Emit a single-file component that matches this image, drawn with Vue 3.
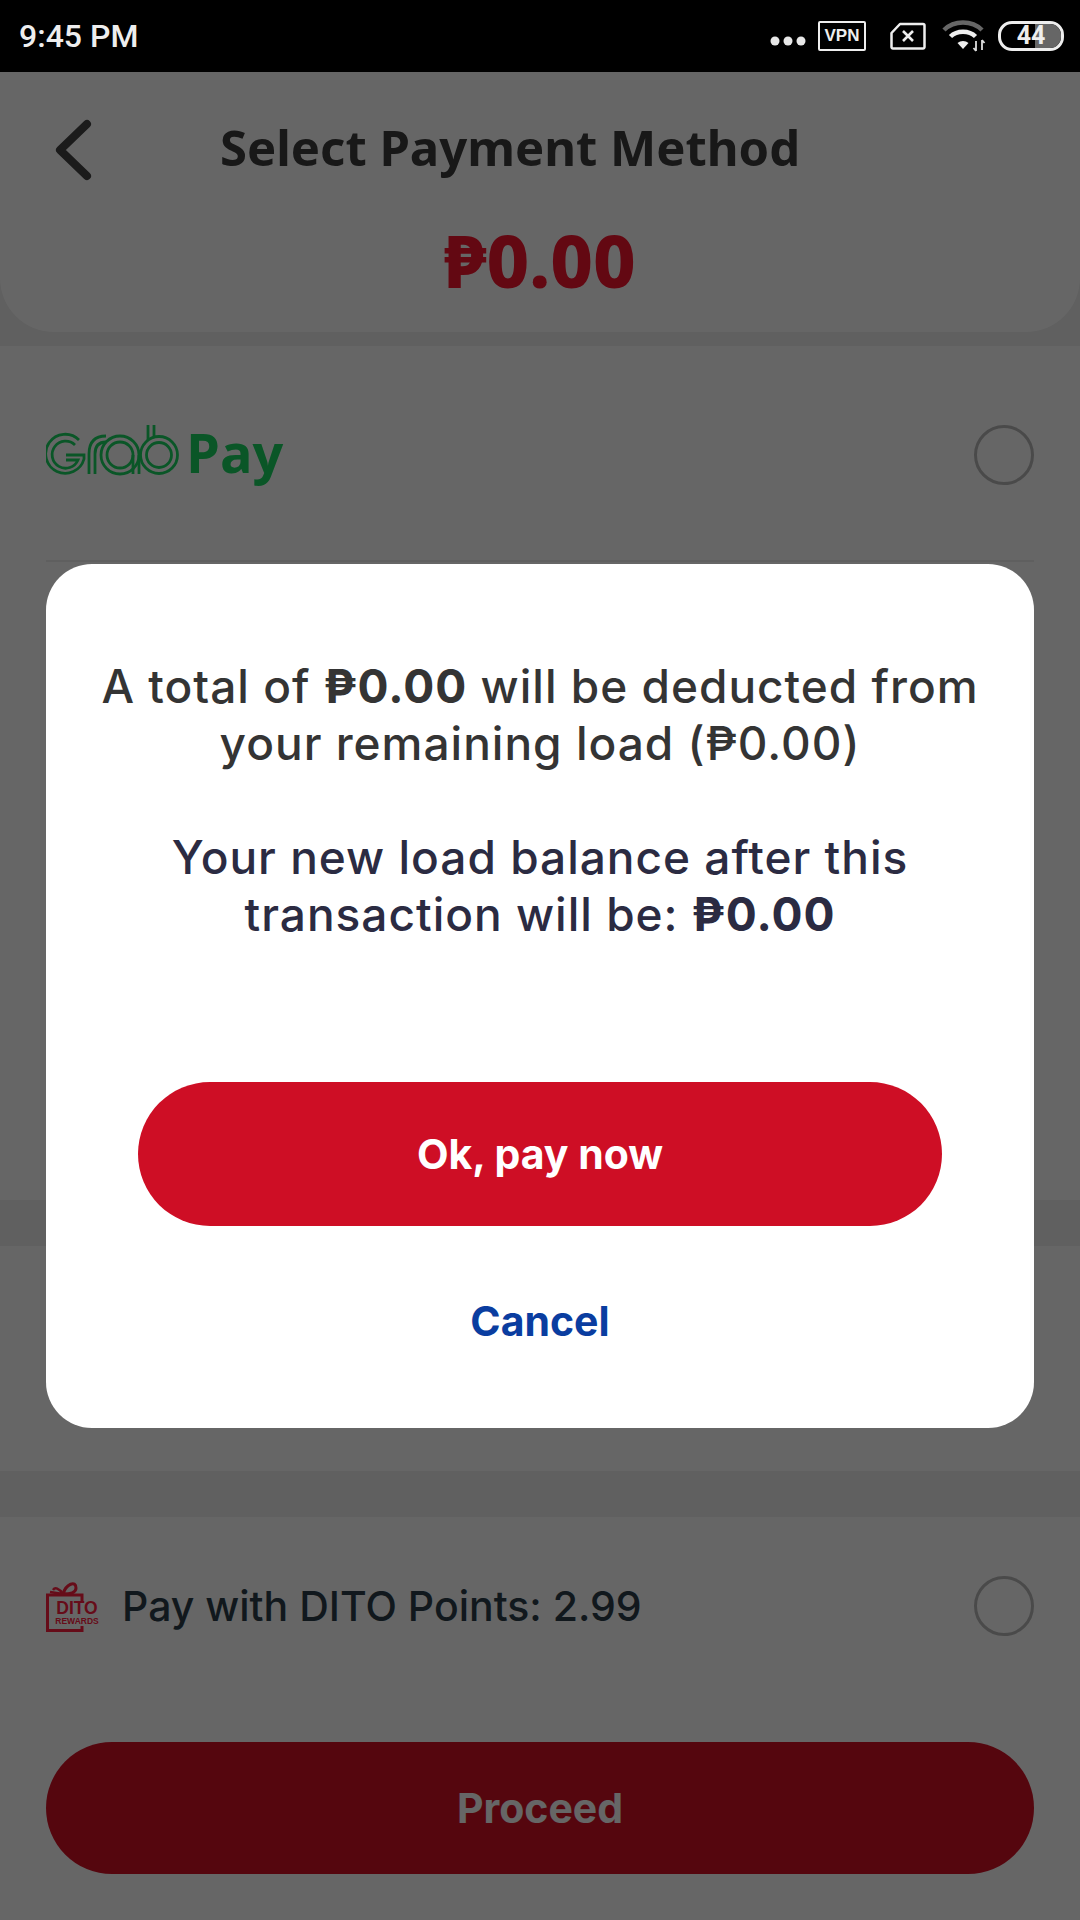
<template>
  <div class="screen">
    <div class="status-bar">
      <span class="clock">9:45 PM</span>
      <div class="status-icons">
        <svg class="dots" width="36" height="10" viewBox="0 0 36 10">
          <circle cx="5" cy="5" r="4.5" fill="#e8e8e8" />
          <circle cx="18" cy="5" r="4.5" fill="#e8e8e8" />
          <circle cx="31" cy="5" r="4.5" fill="#e8e8e8" />
        </svg>
        <span class="vpn">VPN</span>
        <svg class="sim" width="36" height="28" viewBox="0 0 36 28">
          <path d="M10 2H33a1.500 1.500 0 0 1 1.500 1.500V25a1.500 1.500 0 0 1-1.500 1.500H3A1.500 1.500 0 0 1 1.500 25V11Z" fill="none" stroke="#eee" stroke-width="2.500" stroke-linejoin="round" />
          <path d="M13 9l10 10M23 9L13 19" stroke="#eee" stroke-width="2.600" />
        </svg>
        <svg class="wifi" width="44" height="34" viewBox="0 0 44 34">
          <path d="M2 11C12 1 30 1 40 11" fill="none" stroke="#666" stroke-width="4.500" />
          <path d="M8.500 17.500C15 11 27 11 33.500 17.500" fill="none" stroke="#eee" stroke-width="4.500" />
          <path d="M15.500 24a8.500 8.500 0 0 1 11 0L21 30Z" fill="#eee" />
          <path d="M34 22v10M34 32l-2.500-3M40 31V21M40 21l2.500 3" stroke="#ddd" stroke-width="1.800" fill="none" />
        </svg>
        <div class="battery">
          <div class="battery-fill"></div>
          <span class="battery-num">44</span>
        </div>
      </div>
    </div>

    <div class="page">
      <div class="header">
        <div class="title-row">
          <svg class="back" width="38" height="62" viewBox="0 0 38 62">
            <path d="M33 5L6 31l27 26" fill="none" stroke="#444" stroke-width="8" stroke-linecap="round" stroke-linejoin="round" />
          </svg>
          <span class="title">Select Payment Method</span>
        </div>
        <div class="amount">₱0.00</div>
      </div>

      <div class="section grab-section">
        <div class="row grab-row">
          <div class="grab-logo">
            <svg width="140" height="62" viewBox="0 2 140 62">
              <g fill="none" stroke="#1ad863" stroke-width="2.800">
                <path d="M33 18A19.500 19.500 0 1 0 38 37V33H20" />
                <path d="M29 23A13.500 13.500 0 1 0 32 38H20" />
                <path d="M43 52V32Q43 14 60 14" />
                <path d="M49 52V32Q49 20 60 20" />
                <circle cx="74" cy="33" r="19" />
                <circle cx="74" cy="33" r="13" />
                <path d="M93 33V52M87 33V52" />
                <circle cx="113" cy="33" r="18.500" />
                <circle cx="113" cy="33" r="12.500" />
                <path d="M102 18V3M108 15V3" />
              </g>
            </svg>
            <span class="grab-pay">Pay</span>
          </div>
          <span class="radio"></span>
        </div>
        <div class="divider"></div>
      </div>

      <div class="band"></div>
      <div class="section middle-section"></div>
      <div class="band"></div>

      <div class="section points-section">
        <div class="row points-row">
          <div class="points-label">
            <svg class="dito" width="54" height="52" viewBox="0 0 54 52">
              <g fill="none" stroke="#ff2040">
                <path d="M36 21V15H1.500V50.500H36V46" stroke-width="3" />
                <path d="M17 14C20 4 30 0 30 8C30 13 22 14 17 14Z" stroke-width="3" />
                <path d="M17 14C13 8 9 7 7 10M17 14L4 12" stroke-width="2.500" />
              </g>
              <text x="31" y="34" class="dito-word">DITO</text>
              <text x="31" y="44" class="dito-sub">REWARDS</text>
            </svg>
            <span>Pay with DITO Points: 2.99</span>
          </div>
          <span class="radio"></span>
        </div>
        <button class="proceed">Proceed</button>
      </div>

      <div class="overlay">
        <div class="modal">
          <div class="message">
            <p class="line-one">A total of <b>₱0.00</b> will be deducted from<br />your remaining load (₱0.00)</p>
            <p class="line-two">Your new load balance after this<br />transaction will be: <b>₱0.00</b></p>
          </div>
          <button class="pay-now">Ok, pay now</button>
          <button class="cancel">Cancel</button>
        </div>
      </div>
    </div>
  </div>
</template>

<script setup>
</script>

<style>
html, body {
  margin: 0;
  background: #fff;
}
</style>

<style scoped>
.screen {
  width: 1080px;
  height: 1920px;
  display: flex;
  flex-direction: column;
  overflow: hidden;
  font-family: Inter, "Noto Sans", sans-serif;
}
.status-bar {
  height: 72px;
  background: #000;
  display: flex;
  align-items: center;
  justify-content: space-between;
  padding: 0 16px 0 19px;
  color: #eee;
  flex-shrink: 0;
}
.clock {
  font-family: Roboto, sans-serif;
  font-size: 32px;
  font-weight: 500;
}
.status-icons {
  display: flex;
  align-items: center;
}
.dots {
  margin: 10px 12px 0 0;
}
.vpn {
  width: 44px;
  height: 26px;
  border: 2px solid #eee;
  font-family: "Liberation Sans", sans-serif;
  font-size: 17px;
  font-weight: 700;
  line-height: 26px;
  text-align: center;
  margin-right: 24px;
  border-radius: 2px;
}
.sim {
  margin-right: 16px;
}
.wifi {
  margin-right: 12px;
}
.battery {
  position: relative;
  width: 60px;
  height: 24px;
  border: 3px solid #eee;
  border-radius: 14px;
  text-align: center;
  overflow: hidden;
}
.battery-fill {
  position: absolute;
  top: 0;
  bottom: 0;
  left: 56%;
  width: 44%;
  background: #666;
}
.battery-num {
  position: relative;
  display: block;
  font-family: Roboto, sans-serif;
  font-size: 25px;
  font-weight: 700;
  line-height: 24px;
}
.page {
  position: relative;
  flex: 1;
  display: flex;
  flex-direction: column;
  background: #efefef;
}
.header {
  height: 260px;
  box-sizing: border-box;
  background: #fff;
  border-radius: 0 0 54px 54px;
  padding-top: 43px;
  margin-bottom: 14px;
}
.title-row {
  height: 64px;
  display: flex;
  align-items: center;
  padding-left: 54px;
}
.back {
  margin-top: 6px;
}
.title {
  margin-left: 128px;
  font-family: "Noto Sans", sans-serif;
  font-size: 49px;
  font-weight: 700;
  color: #3d3d3d;
}
.amount {
  margin-top: 42px;
  text-align: center;
  font-family: "Noto Sans", sans-serif;
  font-size: 74px;
  line-height: 78px;
  font-weight: 800;
  color: #f7142f;
}
.section {
  background: #fff;
  padding: 0 46px;
}
.row {
  display: flex;
  align-items: center;
  justify-content: space-between;
}
.grab-section {
  height: 854px;
  flex-shrink: 0;
}
.grab-row {
  height: 214px;
  box-sizing: border-box;
  padding-top: 4px;
}
.grab-logo {
  display: flex;
  align-items: center;
}
.grab-pay {
  margin-top: -6px;
  font-family: "Open Sans", sans-serif;
  font-size: 54px;
  font-weight: 700;
  color: #1ad863;
}
.radio {
  width: 54px;
  height: 54px;
  border: 3px solid #b9b9b9;
  border-radius: 50%;
}
.divider {
  height: 2px;
  background: #eeeeee;
}
.band {
  height: 46px;
  flex-shrink: 0;
  background: #f0f0f0;
}
.middle-section {
  height: 225px;
  flex-shrink: 0;
}
.points-section {
  flex: 1;
}
.points-row {
  height: 178px;
}
.points-label {
  display: flex;
  align-items: center;
  gap: 22px;
  font-size: 41px;
  font-weight: 500;
  color: #2c3e4a;
}
.dito-word {
  font-family: "Liberation Sans", sans-serif;
  font-size: 17.500px;
  font-weight: 700;
  text-anchor: middle;
  fill: #ff2040;
}
.dito-sub {
  font-family: "Liberation Sans", sans-serif;
  font-size: 8.500px;
  font-weight: 700;
  text-anchor: middle;
  fill: #ff2040;
}
.proceed {
  display: block;
  width: 100%;
  height: 132px;
  margin-top: 47px;
  border: none;
  border-radius: 66px;
  background: #d40f25;
  color: #fff;
  font-family: inherit;
  font-size: 41px;
  font-weight: 700;
}
.overlay {
  position: absolute;
  inset: 0;
  background: rgba(0, 0, 0, 0.6);
  display: flex;
  justify-content: center;
  padding-top: 492px;
  box-sizing: border-box;
}
.modal {
  width: 988px;
  height: 864px;
  box-sizing: border-box;
  background: #fff;
  border-radius: 46px;
  padding-top: 94px;
  display: flex;
  flex-direction: column;
  align-items: center;
}
.message {
  height: 424px;
  text-align: center;
  font-size: 46px;
  letter-spacing: 1px;
  line-height: 57px;
  font-weight: 550;
}
.message p {
  margin: 0;
}
.line-one {
  color: #343434;
  padding-bottom: 57px;
}
.line-two {
  color: #2b2b42;
}
.message b {
  font-weight: 700;
}
.pay-now {
  width: 804px;
  height: 144px;
  border: none;
  border-radius: 72px;
  background: #ce0e25;
  color: #fff;
  font-family: inherit;
  font-size: 41px;
  font-weight: 700;
}
.cancel {
  margin-top: 62px;
  border: none;
  background: none;
  color: #0a3da0;
  font-family: inherit;
  font-size: 41px;
  font-weight: 700;
  line-height: 64px;
}
</style>
